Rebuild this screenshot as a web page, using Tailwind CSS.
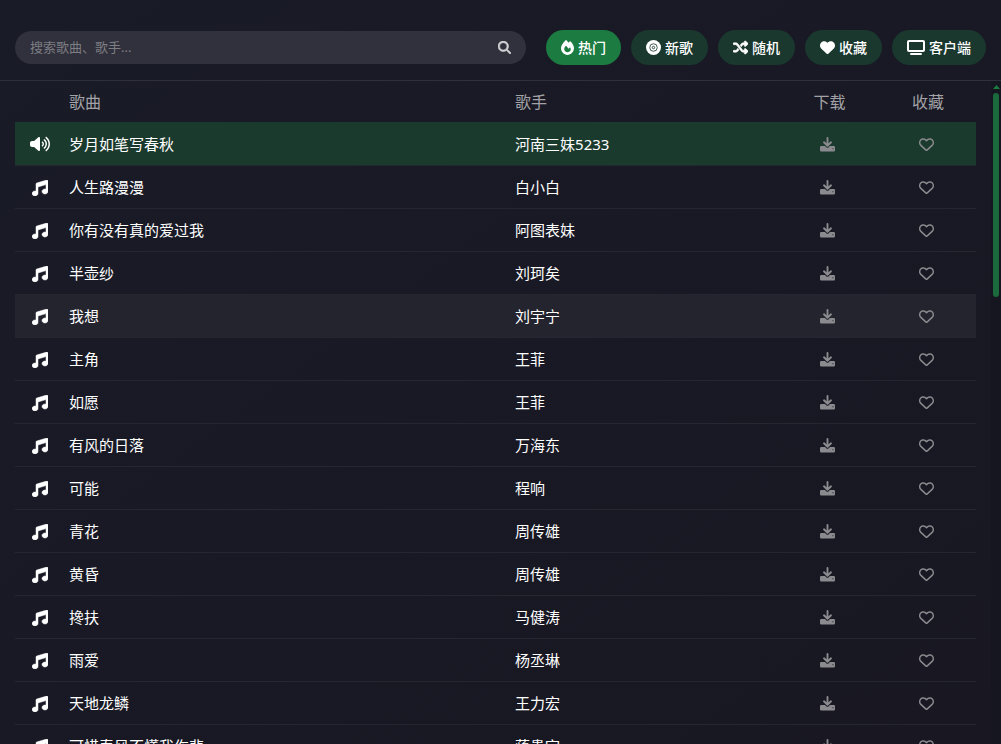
<!DOCTYPE html>
<html lang="zh-CN">
<head>
    <meta charset="UTF-8">
    <meta name="viewport" content="width=device-width, initial-scale=1.0">
    <title>在线音乐播放器</title>
    <script src="https://cdn.jsdelivr.net/npm/@tailwindcss/browser@4"></script>
</head>
<body class="h-screen overflow-hidden flex flex-col bg-linear-to-br from-[#191b27] to-[#181722] text-white font-['Noto_Sans','Noto_Sans_CJK_SC',sans-serif]">

    <!-- Icons -->
    <svg class="hidden">
        <symbol id="search" viewBox="0 0 512 512"><path stroke="currentColor" stroke-width="20" d="M416 208c0 45.9-14.9 88.3-40 122.7L502.6 457.4c12.5 12.5 12.5 32.8 0 45.3s-32.8 12.5-45.3 0L330.7 376c-34.4 25.2-76.8 40-122.7 40C93.1 416 0 322.9 0 208S93.1 0 208 0S416 93.1 416 208zM208 352a144 144 0 1 0 0-288 144 144 0 1 0 0 288z"/></symbol>
        <symbol id="fire" viewBox="0 0 448 512"><path fill-rule="evenodd" d="M159.300 5.400c7.800-7.300 19.900-7.200 27.700 .1c27.600 25.900 53.500 53.800 77.700 84c11-14.400 23.500-30.100 37-42.900c7.900-7.400 20.100-7.400 28 .1c34.600 33 63.900 76.600 84.500 118c20.300 40.800 33.800 82.500 33.800 111.900C448 404.200 348.200 512 224 512C98.400 512 0 404.100 0 276.500c0-38.400 17.800-85.300 45.400-131.700C73.300 97.700 112.700 48.600 159.300 5.400zM225.700 416c25.300 0 47.700-7 68.800-21c42.100-29.400 53.400-88.200 28.100-134.400c-4.500-9-16-9.600-22.500-2l-25.200 29.300c-6.600 7.600-18.500 7.400-24.700-.5c-16.500-21-46-58.500-62.800-79.800c-6.300-8-18.300-8.100-24.700-.1c-33.800 42.500-50.800 69.300-50.800 99.400C112 375.400 162.600 416 225.700 416z"/></symbol>
        <symbol id="disc" viewBox="0 0 512 512"><circle cx="256" cy="256" r="256"/><g fill="none" stroke="#1a382d" stroke-width="28"><circle cx="256" cy="256" r="128"/><circle cx="256" cy="256" r="42"/></g></symbol>
        <symbol id="random" viewBox="0 0 512 512"><path stroke="currentColor" stroke-width="20" d="M403.800 34.400c12-5 25.700-2.200 34.900 6.900l64 64c6 6 9.400 14.100 9.400 22.600s-3.400 16.600-9.400 22.600l-64 64c-9.200 9.200-22.900 11.900-34.900 6.900s-19.800-16.600-19.800-29.600V160H352c-10.100 0-19.600 4.700-25.600 12.800L284 229.300 244 176l31.200-41.600C293.300 110.200 321.800 96 352 96h32V64c0-12.900 7.800-24.600 19.800-29.600zM164 282.700L204 336l-31.200 41.600C154.700 401.800 126.200 416 96 416H32c-17.700 0-32-14.300-32-32s14.300-32 32-32H96c10.100 0 19.600-4.700 25.600-12.800L164 282.700zm274.600 188c-9.200 9.200-22.900 11.900-34.900 6.900s-19.800-16.600-19.800-29.600V416H352c-30.200 0-58.700-14.200-76.800-38.400L121.600 172.800c-6-8.100-15.500-12.800-25.600-12.800H32c-17.700 0-32-14.300-32-32s14.300-32 32-32H96c30.200 0 58.700 14.200 76.800 38.400L326.400 339.200c6 8.100 15.500 12.800 25.600 12.800h32V320c0-12.900 7.800-24.600 19.800-29.600s25.700-2.200 34.900 6.900l64 64c6 6 9.400 14.100 9.400 22.600s-3.400 16.600-9.400 22.600l-64 64z"/></symbol>
        <symbol id="heart" viewBox="0 0 512 512"><path d="M47.600 300.400L228.300 469.100c7.500 7 17.400 10.900 27.700 10.900s20.200-3.900 27.700-10.900L464.400 300.400c30.400-28.300 47.600-68 47.600-109.500v-5.800c0-69.900-50.500-129.500-119.400-141C347 36.500 300.600 51.400 268 84L256 96 244 84c-32.600-32.600-79-47.500-124.600-39.900C50.500 55.600 0 115.200 0 185.100v5.800c0 41.500 17.200 81.200 47.600 109.500z"/></symbol>
        <symbol id="heart-line" viewBox="0 0 512 512"><path d="M225.800 468.200l-2.500-2.300L48.100 303.200C17.400 274.700 0 234.700 0 192.800v-3.300c0-70.400 50-130.800 119.200-144C158.600 37.900 198.900 47 231 69.600c9 6.400 17.400 13.800 25 22.300c4.200-4.800 8.700-9.200 13.500-13.300c3.700-3.200 7.500-6.200 11.500-9c0 0 0 0 0 0C313.100 47 353.400 37.900 392.800 45.400C462 58.600 512 119.100 512 189.500v3.300c0 41.900-17.400 81.900-48.100 110.400L288.700 465.900l-2.500 2.300c-8.200 7.600-19 11.900-30.200 11.900s-22-4.200-30.200-11.900zM239.100 145c-.4-.3-.7-.7-1-1.100l-17.800-20c0 0-.1-.1-.1-.1c0 0 0 0 0 0c-23.100-25.900-58-37.700-92-31.200C81.600 101.500 48 142.100 48 189.500v3.300c0 28.500 11.900 55.800 32.800 75.200L256 430.700 431.200 268c20.900-19.400 32.800-46.700 32.800-75.200v-3.300c0-47.300-33.600-88-80.100-96.900c-34-6.500-69 5.400-92 31.200c0 0 0 0-.1 .1s0 0-.1 .1l-17.800 20c-.3 .4-.7 .7-1 1.100c-4.500 4.500-10.600 7-16.900 7s-12.400-2.500-16.900-7z"/></symbol>
        <symbol id="screen" viewBox="0 0 18 15"><path fill-rule="evenodd" d="M2 0h14a2 2 0 0 1 2 2v8a2 2 0 0 1-2 2H2a2 2 0 0 1-2-2V2a2 2 0 0 1 2-2zM2 2v8h14V2zM4 13h10a1 1 0 0 1 0 2H4a1 1 0 0 1 0-2z"/></symbol>
        <symbol id="music" viewBox="0 0 512 512"><path stroke="currentColor" stroke-width="16" d="M499.100 6.300c8.100 6 12.900 15.600 12.900 25.700v72V368c0 44.200-43 80-96 80s-96-35.800-96-80s43-80 96-80c11.200 0 22 1.600 32 4.600V147L192 223.800V432c0 44.200-43 80-96 80s-96-35.800-96-80s43-80 96-80c11.200 0 22 1.600 32 4.600V200 128c0-14.100 9.300-26.600 22.800-30.700l320-96c9.700-2.900 20.200-1.100 28.300 5z"/></symbol>
        <symbol id="volume" viewBox="0 0 640 512"><path d="M533.600 32.500C598.500 85.200 640 165.800 640 256s-41.500 170.700-106.400 223.500c-10.300 8.400-25.400 6.800-33.800-3.500s-6.800-25.400 3.500-33.800C557.500 398.200 592 331.200 592 256s-34.500-142.200-88.700-186.300c-10.300-8.400-11.800-23.500-3.500-33.800s23.500-11.800 33.800-3.500zM473.100 107c43.200 35.200 70.900 88.900 70.900 149s-27.700 113.800-70.900 149c-10.300 8.400-25.400 6.800-33.800-3.500s-6.800-25.400 3.500-33.800C475.300 341.300 496 301.100 496 256s-20.700-85.300-53.200-111.800c-10.300-8.400-11.800-23.500-3.500-33.800s23.500-11.800 33.800-3.500zm-60.500 74.500C434.100 199.100 448 225.900 448 256s-13.900 56.900-35.400 74.500c-10.300 8.400-25.400 6.800-33.800-3.500s-6.800-25.400 3.500-33.800C393.100 284.400 400 271 400 256s-6.900-28.400-17.700-37.300c-10.300-8.400-11.800-23.500-3.500-33.800s23.500-11.800 33.800-3.500zM301.100 34.800C312.600 40 320 51.400 320 64V448c0 12.600-7.400 24-18.900 29.200s-25 3.100-34.400-5.300L131.800 352H64c-35.300 0-64-28.700-64-64V224c0-35.300 28.700-64 64-64h67.800L266.700 40.100c9.400-8.400 22.900-10.400 34.400-5.300z"/></symbol>
        <symbol id="download" viewBox="0 0 15 15"><path d="M1.200 9H5l1.500 1.400a1.500 1.500 0 0 0 2 0L10 9h3.800a1.200 1.200 0 0 1 1.200 1.200v3a1.200 1.200 0 0 1-1.200 1.200H1.200a1.200 1.200 0 0 1-1.200-1.200v-3a1.200 1.200 0 0 1 1.200-1.200zm11.300 2.200v1h1v-1z"/><path fill="none" stroke="currentColor" stroke-width="1.900" stroke-linecap="round" stroke-linejoin="round" d="M7.500 1v7.500M4 5.300l3.500 3.400 3.500-3.400"/></symbol>
    </svg>

    <!-- Search and categories -->
    <header class="shrink-0 flex items-center gap-5 px-[15px] pt-[30px] pb-[15px] border-b border-[#2f303b]">
        <form class="flex-1 h-[33px] flex items-center rounded-full bg-[#30313c] px-[15px]">
            <input type="text" aria-label="搜索" placeholder="搜索歌曲、歌手..." class="flex-1 min-w-0 text-[13px] outline-none placeholder:text-[#7d7d83]">
            <button type="button" aria-label="搜索" class="text-[#d3d3d6]"><svg class="size-[13px] fill-current"><use href="#search"/></svg></button>
        </form>
        <nav class="flex gap-[10px] text-sm font-medium">
            <button class="h-[35px] px-[15px] flex items-center gap-1 rounded-full bg-[#1b7b40]"><svg class="w-[13px] h-[15px] fill-current"><use href="#fire"/></svg>热门</button>
            <button class="h-[35px] px-[15px] flex items-center gap-1 rounded-full bg-[#1a382d]"><svg class="size-[15px] fill-current"><use href="#disc"/></svg>新歌</button>
            <button class="h-[35px] px-[15px] flex items-center gap-1 rounded-full bg-[#1a382d]"><svg class="size-[15px] fill-current"><use href="#random"/></svg>随机</button>
            <button class="h-[35px] px-[15px] flex items-center gap-1 rounded-full bg-[#1a382d]"><svg class="size-[15px] fill-current"><use href="#heart"/></svg>收藏</button>
            <button class="h-[35px] px-[15px] flex items-center gap-1 rounded-full bg-[#1a382d]"><svg class="w-[18px] h-[15px] fill-current"><use href="#screen"/></svg>客户端</button>
        </nav>
    </header>

    <!-- Song list -->
    <main class="flex-1 min-h-0 flex overflow-hidden">
        <div class="flex-1 px-[15px]">
            <table class="w-full table-fixed border-collapse">
                <thead>
                    <tr class="h-[41px] text-base text-[#a3a3a7]">
                        <th class="w-[54px]" aria-label="状态"></th>
                        <th class="font-normal text-left">歌曲</th>
                        <th class="w-[31%] font-normal text-left">歌手</th>
                        <th class="w-[33px] font-normal whitespace-nowrap">下载</th>
                        <th class="w-[130px] pl-[34px] font-normal">收藏</th>
                    </tr>
                </thead>
                <tbody id="songList"></tbody>
            </table>
        </div>
        <!-- Scrollbar -->
        <div class="w-[10px] shrink-0 flex flex-col items-center gap-1 pt-1 bg-[#161620]">
            <svg class="w-[7px] h-1 fill-[#1b7b40]" viewBox="0 0 7 4"><path d="M0 4l3.500-4L7 4z"/></svg>
            <div class="w-[6px] h-[204px] rounded-full bg-[#1b6a3d]"></div>
        </div>
    </main>

    <script>
        const songs = [
            ['岁月如笔写春秋', '河南三妹5233'],
            ['人生路漫漫', '白小白'],
            ['你有没有真的爱过我', '阿图表妹'],
            ['半壶纱', '刘珂矣'],
            ['我想', '刘宇宁'],
            ['主角', '王菲'],
            ['如愿', '王菲'],
            ['有风的日落', '万海东'],
            ['可能', '程响'],
            ['青花', '周传雄'],
            ['黄昏', '周传雄'],
            ['搀扶', '马健涛'],
            ['雨爱', '杨丞琳'],
            ['天地龙鳞', '王力宏'],
            ['可惜春风不懂我伤悲', '蒋贵宇']
        ];
        const playing = 0;
        const hovered = 4;

        // Render the rows
        document.getElementById('songList').innerHTML = songs.map(([title, singer], i) => {
            const bg = i === playing ? 'bg-[#1b3a2e]' : i === hovered ? 'bg-[#24242f]' : '';
            const icon = i === playing
                ? '<svg class="w-5 h-4 ml-[15px] fill-current"><use href="#volume"/></svg>'
                : '<svg class="size-4 ml-[17px] fill-current"><use href="#music"/></svg>';
            return `
                <tr class="h-[43px] text-[15px] border-b border-[#252630] ${bg}">
                    <td class="pt-[2px]">${icon}</td>
                    <td class="pt-[2px] truncate">${title}</td>
                    <td class="pt-[2px] truncate">${singer}</td>
                    <td class="pt-[2px]"><button aria-label="下载" class="block ml-[7px] text-[#8b8b8f]"><svg class="size-[15px] fill-current"><use href="#download"/></svg></button></td>
                    <td class="pt-[2px] pl-[34px]"><button aria-label="收藏" class="block ml-[39px] text-[#8b8b8f]"><svg class="size-[15px] fill-current"><use href="#heart-line"/></svg></button></td>
                </tr>`;
        }).join('');
    </script>

</body>
</html>
